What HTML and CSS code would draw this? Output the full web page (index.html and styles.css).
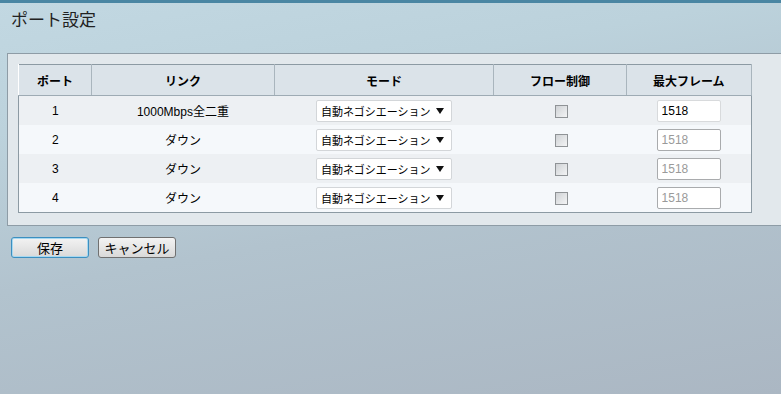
FILE: index.html
```html
<!DOCTYPE html>
<html>
<head>
<title>ポート設定</title>
<meta charset="utf-8">
<link rel="stylesheet" href="styles.css">
</head>
<body>

<div class="topbar"></div>
<h1 class="page-title">ポート設定</h1>

<div class="panel">
    <table class="port-table">
        <tr>
            <th class="col-port">ポート</th>
            <th class="col-link">リンク</th>
            <th class="col-mode">モード</th>
            <th class="col-flow">フロー制御</th>
            <th class="col-frame">最大フレーム</th>
        </tr>
        <tr>
            <td>1</td>
            <td>1000Mbps全二重</td>
            <td><span class="select"><select><option>自動ネゴシエーション</option></select></span></td>
            <td><input type="checkbox" class="chk"></td>
            <td><input type="text" class="frame" value="1518"></td>
        </tr>
        <tr>
            <td>2</td>
            <td>ダウン</td>
            <td><span class="select"><select><option>自動ネゴシエーション</option></select></span></td>
            <td><input type="checkbox" class="chk"></td>
            <td><input type="text" class="frame off" value="1518" disabled></td>
        </tr>
        <tr>
            <td>3</td>
            <td>ダウン</td>
            <td><span class="select"><select><option>自動ネゴシエーション</option></select></span></td>
            <td><input type="checkbox" class="chk"></td>
            <td><input type="text" class="frame off" value="1518" disabled></td>
        </tr>
        <tr>
            <td>4</td>
            <td>ダウン</td>
            <td><span class="select"><select><option>自動ネゴシエーション</option></select></span></td>
            <td><input type="checkbox" class="chk"></td>
            <td><input type="text" class="frame off" value="1518" disabled></td>
        </tr>
    </table>
</div>

<div class="buttons">
    <button class="btn btn-save">保存</button>
    <button class="btn">キャンセル</button>
</div>

</body>
</html>
```

FILE: styles.css
```css
body {
    margin: 0;
    height: 394px;
    overflow: hidden;
    font-family: "Liberation Sans", "Noto Sans CJK JP", sans-serif;
    font-size: 12px;
    color: #000;
    background: linear-gradient(170deg, #c2d8e2 0%, #bcd2dc 25%, #b2c3ce 55%, #abb7c3 100%);
}

.topbar {
    height: 3px;
    background-color: #4a86a3;
}

.page-title {
    margin: 0 0 21px 0;
    padding: 7px 11px 0 11px;
    height: 22px;
    line-height: 22px;
    font-size: 17px;
    font-weight: normal;
    color: #222;
}

.panel {
    margin-left: 7px;
    padding: 10px 0 12px 10px;
    background-color: #e2e8ec;
    border: 1px solid #8e9ca6;
    border-right: none;
}

.port-table {
    border-collapse: collapse;
    width: 734px;
    border: 1px solid #8c9aa3;
}

.port-table th {
    height: 30px;
    padding: 0;
    background-color: #dbe3e9;
    border-bottom: 1px solid #9eabb4;
    border-left: 1px solid #fff;
    border-right: 1px solid #a9b5bd;
    font-weight: bold;
    text-align: center;
}

.col-port { width: 72px; }
.col-link { width: 181px; }
.col-mode { width: 218px; }
.col-flow { width: 131px; }
.col-frame { width: 124px; }

.port-table td {
    height: 29px;
    padding: 0;
    text-align: center;
}

.port-table tr:nth-of-type(even) td {
    background-color: #edf0f3;
}

.port-table tr:nth-of-type(odd) td {
    background-color: #f5f8fb;
}

.select {
    position: relative;
    display: inline-block;
    vertical-align: middle;
}

.select select {
    appearance: none;
    -webkit-appearance: none;
    width: 136px;
    height: 22px;
    margin: 0;
    padding: 0 0 0 4px;
    border: 1px solid #d3d6d9;
    border-radius: 2px;
    background-color: #fff;
    font-family: "Noto Sans CJK JP", sans-serif;
    font-size: 11px;
    color: #000;
}

.select::after {
    content: "";
    position: absolute;
    right: 8px;
    top: 8px;
    border-left: 4px solid transparent;
    border-right: 4px solid transparent;
    border-top: 6px solid #111;
    pointer-events: none;
}

.chk {
    appearance: none;
    -webkit-appearance: none;
    width: 13px;
    height: 13px;
    margin: 0 0 0 4px;
    vertical-align: middle;
    border: 1px solid #8f9396;
    background: linear-gradient(135deg, #cfd2d5, #f3f4f5);
}

.frame {
    width: 64px;
    height: 22px;
    box-sizing: border-box;
    margin: 0;
    padding: 0 4px;
    vertical-align: middle;
    border: 1px solid #d8dadc;
    border-radius: 2px;
    background-color: #fff;
    font-family: "Liberation Sans", sans-serif;
    font-size: 12px;
    color: #000;
}

.frame.off {
    border-color: #a9abad;
    color: #9a9a9a;
}

.buttons {
    display: flex;
    gap: 9px;
    padding: 11px 0 0 11px;
}

.btn {
    width: 78px;
    height: 21px;
    padding: 0;
    border: 1px solid #707070;
    border-radius: 3px;
    background: linear-gradient(#f3f3f3, #e6e6e6 50%, #d9d9d9);
    font-family: "Noto Sans CJK JP", sans-serif;
    font-size: 13px;
    line-height: 17px;
    color: #000;
}

.btn-save {
    border-color: #3c8fc0;
    box-shadow: inset 0 0 0 1px #a6d8f0;
}
```
